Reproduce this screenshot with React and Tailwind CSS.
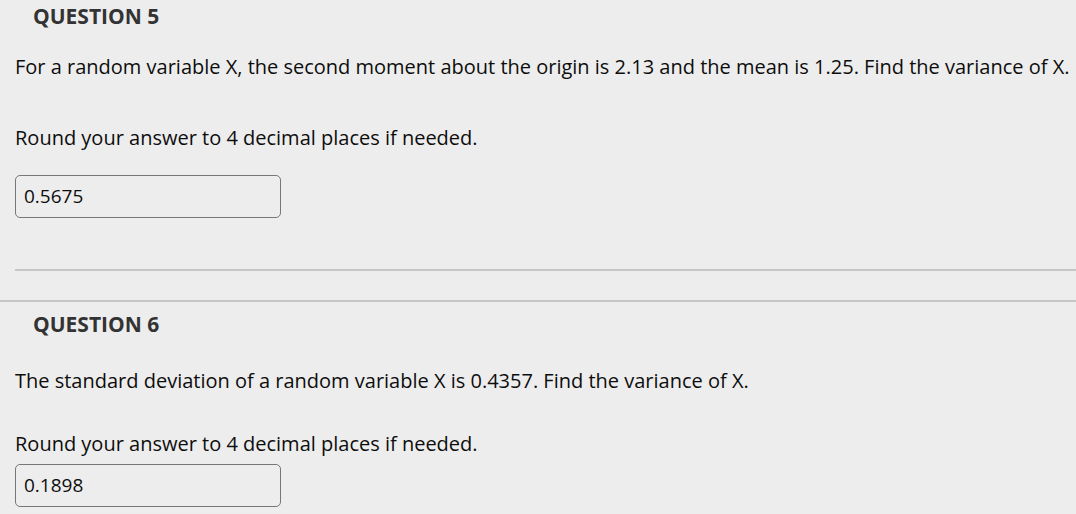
import React from 'react';

const questions = [
  {
    num: 5,
    text: 'For a random variable X, the second moment about the origin is 2.13 and the mean is 1.25. Find the variance of X.',
    answer: '0.5675',
  },
  {
    num: 6,
    text: 'The standard deviation of a random variable X is 0.4357. Find the variance of X.',
    answer: '0.1898',
  },
];

function Question({ q, first }) {
  return (
    <div className={first ? 'pl-[15px]' : 'pl-[15px] pt-[6px]'}>
      <h3 className="pl-[18px] text-[21px] font-bold leading-[32px] text-[#333]">QUESTION {q.num}</h3>
      <p className={`${first ? 'mt-[21px]' : 'mt-[27px]'} text-[20px] leading-[28px] text-[#0d0d0d]`}>{q.text}</p>
      <p className={`${first ? 'mt-[43px]' : 'mt-[35px]'} text-[20px] leading-[28px] text-[#0d0d0d]`}>Round your answer to 4 decimal places if needed.</p>
      <div className={`${first ? 'mt-[23px]' : 'mt-[6px]'} flex h-[43px] w-[266px] items-center rounded-[5px] border border-[#777] px-[8px] text-[19px] text-[#0d0d0d]`}>
        {q.answer}
      </div>
    </div>
  );
}

export default function App() {
  return (
    <div className="h-[514px] w-[1076px] overflow-hidden bg-[#ededed]" style={{ fontFamily: '"Open Sans", sans-serif' }}>
      <Question q={questions[0]} first />
      <div className="ml-[15px] mt-[51px] h-[2px] bg-[#c6c6c6]" />
      <div className="mt-[29px] h-[2px] bg-[#c6c6c6]" />
      <Question q={questions[1]} />
    </div>
  );
}
